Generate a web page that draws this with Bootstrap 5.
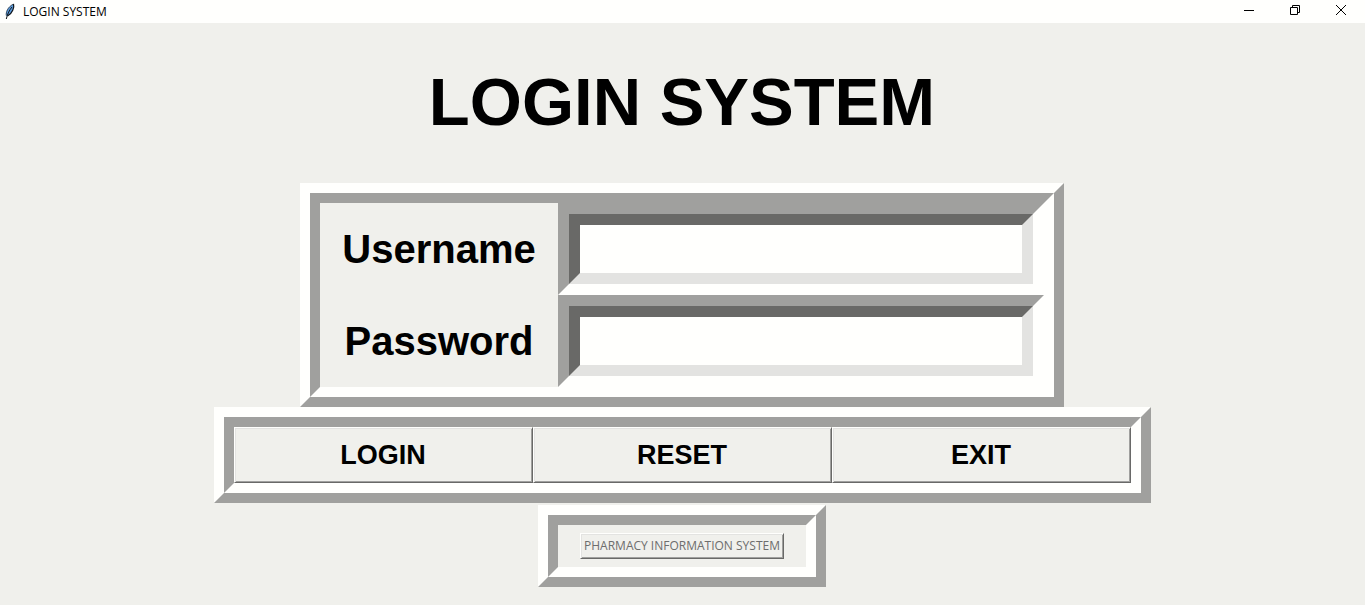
<!DOCTYPE html>
<html lang="en">
<head>
<meta charset="utf-8">
<meta name="viewport" content="width=device-width, initial-scale=1">
<title>LOGIN SYSTEM</title>
<link href="https://cdn.jsdelivr.net/npm/bootstrap@5.3.0/dist/css/bootstrap.min.css" rel="stylesheet">
<style>
  :root {
    --face: #f0f0ec;
    --hilite: #fffffd;
    --soft: #e3e3e1;
    --shade: #a0a09e;
    --deep: #696967;
  }
  body { background: var(--face); color: #000; font-family: "Liberation Sans", Arial, sans-serif; }
  .titlebar { background: var(--hilite); height: 23px; font: 12px/23px "Open Sans", "Segoe UI", sans-serif; }
  .titlebar .caption { padding-left: 4px; gap: 6px; }
  .win-btn { width: 46px; height: 23px; padding: 0 2px 3px 0; border: 0; background: transparent; color: #000; }
  .window-body { padding-right: 1px; }
  .app-title { font-size: 67px; line-height: 80px; font-weight: 700; padding: 39px 0 41px; }

  /* Ridge frame: raised outer edge, sunken inner edge */
  .ridge, .ridge-in { border: 10px solid; }
  .ridge { width: 100%; border-color: var(--hilite) var(--shade) var(--shade) var(--hilite); }
  .ridge-in { border-color: var(--shade) var(--hilite) var(--hilite) var(--shade); }
  .ridge-form { max-width: 764px; }
  .ridge-actions { max-width: 937px; }
  .ridge-system { max-width: 288px; margin-top: 2px; }

  .field-label { flex: 0 0 238px; font-size: 40px; line-height: 48px; font-weight: 700; text-align: center; }
  .sunken { border: 11px solid; border-color: var(--shade) var(--hilite) var(--hilite) var(--shade); }
  .sunken .form-control {
    height: 70px; padding: 0 4px; border: 11px solid; border-radius: 0;
    border-color: var(--deep) var(--soft) var(--soft) var(--deep);
    background: var(--hilite); color: #000; font-size: 40px; font-weight: 700; box-shadow: none;
  }

  .raised, .raised:disabled {
    border: 1px solid; border-radius: 0; background: var(--face); color: #000; opacity: 1;
    border-color: var(--hilite) var(--deep) var(--deep) var(--hilite);
    box-shadow: inset 1px 1px var(--soft), inset -1px -1px var(--shade);
  }
  .raised-lg { height: 56px; padding: 0; font-size: 27px; line-height: 32px; font-weight: 700; }
  .raised-sm, .raised-sm:disabled { height: 26px; padding: 0 3px; font: 12px/16px "Open Sans", "Segoe UI", sans-serif; color: #6d6d6d; white-space: nowrap; }
  .system-body { height: 42px; }
</style>
</head>
<body>
<header class="titlebar d-flex justify-content-between">
  <div class="caption d-flex align-items-center">
    <svg width="13" height="17" viewBox="0 0 13 17" aria-hidden="true">
      <path d="M2.300 13C1.500 9.500 3.500 4 9.500 1C10.500 4 8.500 10.500 3.500 13Z" fill="#5b9bdc"/>
      <path d="M2.300 12.500C1.800 9.500 3.500 4 9.300 1.200" fill="none" stroke="#26384c" stroke-width=".9"/>
      <path d="M9.500 1C10.500 4 8.500 10.500 3.500 13" fill="none" stroke="#101418" stroke-width="1.200"/>
      <path d="M8 4C5.500 7 3.500 10.500 2.300 16" fill="none" stroke="#101418" stroke-width="1"/>
    </svg>
    <span>LOGIN SYSTEM</span>
  </div>
  <div class="d-flex">
    <button type="button" class="win-btn d-flex align-items-center justify-content-center" aria-label="Minimize">
      <svg width="10" height="10" viewBox="0 0 10 10"><path d="M0 5.500H10" stroke="#000"/></svg>
    </button>
    <button type="button" class="win-btn d-flex align-items-center justify-content-center" aria-label="Restore">
      <svg width="10" height="10" viewBox="0 0 10 10"><path d="M.5 2.500H7.500V9.500H.5ZM2.500 2.500V.5H9.500V7.500H7.500" fill="none" stroke="#000"/></svg>
    </button>
    <button type="button" class="win-btn d-flex align-items-center justify-content-center" aria-label="Close">
      <svg width="10" height="10" viewBox="0 0 10 10"><path d="M0 0L10 10M10 0L0 10" stroke="#000"/></svg>
    </button>
  </div>
</header>

<main class="window-body d-flex flex-column align-items-center">
  <h1 class="app-title m-0 text-center">LOGIN SYSTEM</h1>

  <form class="ridge ridge-form" id="login-form">
    <div class="ridge-in">
      <div class="d-flex align-items-center">
        <label class="field-label" for="username">Username</label>
        <div class="sunken flex-fill"><input class="form-control" type="text" id="username"></div>
      </div>
      <div class="d-flex align-items-center">
        <label class="field-label" for="password">Password</label>
        <div class="sunken flex-fill"><input class="form-control" type="password" id="password"></div>
      </div>
    </div>
  </form>

  <div class="ridge ridge-actions">
    <div class="ridge-in row g-0">
      <button type="submit" form="login-form" class="btn raised raised-lg col">LOGIN</button>
      <button type="reset" form="login-form" class="btn raised raised-lg col">RESET</button>
      <button type="button" class="btn raised raised-lg col">EXIT</button>
    </div>
  </div>

  <div class="ridge ridge-system">
    <div class="ridge-in">
      <div class="system-body d-flex align-items-center justify-content-center">
        <button type="button" class="btn raised raised-sm" disabled>PHARMACY INFORMATION SYSTEM</button>
      </div>
    </div>
  </div>
</main>
<script src="https://cdn.jsdelivr.net/npm/bootstrap@5.3.0/dist/js/bootstrap.bundle.min.js"></script>
</body>
</html>
